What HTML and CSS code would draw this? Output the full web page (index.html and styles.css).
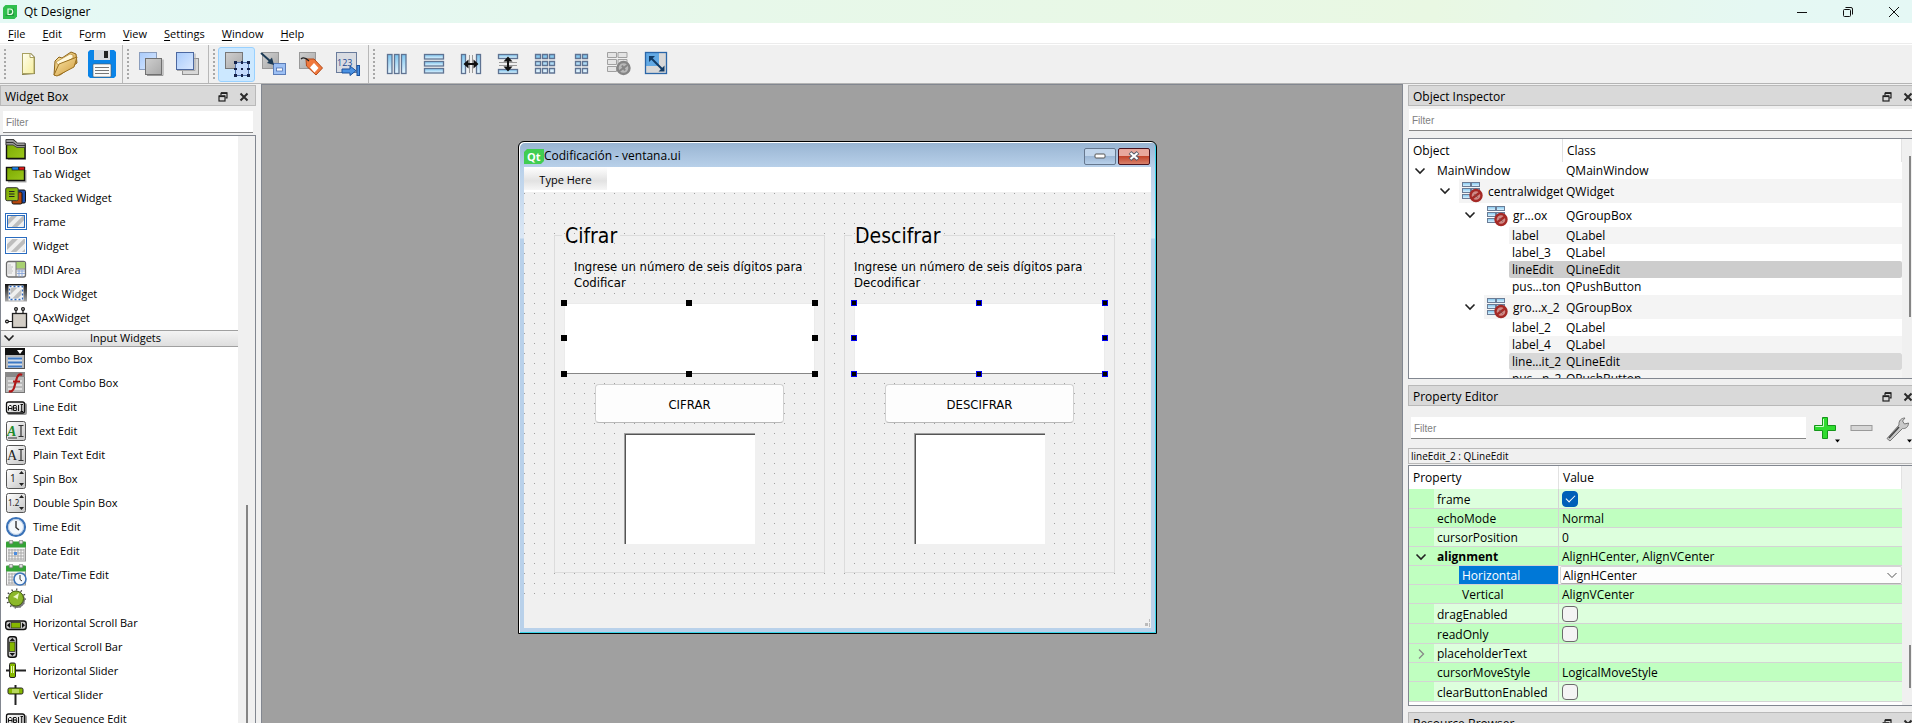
FILE: index.html
```html
<!DOCTYPE html>
<html lang="en">
<head>
<meta charset="utf-8">
<title>Qt Designer</title>
<link rel="stylesheet" href="styles.css">
</head>
<body>
<svg class="defs" aria-hidden="true">
  <defs>
    <linearGradient id="gCell" x1="0" y1="0" x2="0" y2="1"><stop offset="0" stop-color="#7cc4ee"/><stop offset="1" stop-color="#e6f6ff"/></linearGradient>
    <linearGradient id="gGray" x1="0" y1="0" x2="1" y2="1"><stop offset="0" stop-color="#cfcfcf"/><stop offset="1" stop-color="#a9a9a9"/></linearGradient>
    <linearGradient id="gBlue" x1="0" y1="0" x2="1" y2="1"><stop offset="0" stop-color="#a9cbfb"/><stop offset="1" stop-color="#dbe9ff"/></linearGradient>
    <linearGradient id="gGreen" x1="0" y1="0" x2="1" y2="1"><stop offset="0" stop-color="#7aa800"/><stop offset="1" stop-color="#9cc81c"/></linearGradient>
    <linearGradient id="gBtn" x1="0" y1="0" x2="1" y2="1"><stop offset="0" stop-color="#ffffff"/><stop offset="1" stop-color="#c4c4c4"/></linearGradient>
    <linearGradient id="gDark" x1="0" y1="0" x2="0" y2="1"><stop offset="0" stop-color="#111"/><stop offset="1" stop-color="#aaa"/></linearGradient>
    <linearGradient id="gPaper" x1="0" y1="0" x2="1" y2="1"><stop offset="0" stop-color="#fffef0"/><stop offset="1" stop-color="#f6ee9c"/></linearGradient>
    <linearGradient id="gFolder" x1="0" y1="0" x2="1" y2="1"><stop offset="0" stop-color="#fbe7a8"/><stop offset="1" stop-color="#cf9a3c"/></linearGradient>
    <pattern id="hatch" width="8" height="8" patternUnits="userSpaceOnUse" patternTransform="rotate(45)"><rect width="8" height="8" fill="#efefef"/><rect width="4" height="8" fill="#bdbdbd"/></pattern>
  </defs>
  <symbol id="float" viewBox="0 0 10 10"><path d="M3 .8h6v5H7.500M3 .8v2.500" fill="none" stroke="#222" stroke-width="1.200"/><path d="M3 1.200h6" stroke="#222" stroke-width="1.600"/><rect x="1" y="4" width="6" height="5" fill="none" stroke="#222" stroke-width="1.200"/><path d="M1 4.300h6" stroke="#222" stroke-width="1.600"/></symbol>
  <symbol id="close" viewBox="0 0 10 10"><path d="M1.500 1.500l7 7M8.500 1.500l-7 7" stroke="#2b2b2b" stroke-width="2"/></symbol>
  <symbol id="down" viewBox="0 0 12 12"><path d="M1.500 3.500L6 8l4.500-4.500" fill="none" stroke="#222" stroke-width="1.600"/></symbol>
  <symbol id="nolayout" viewBox="0 0 22 22">
    <g fill="url(#gCell)" stroke="#6a7c96"><rect x="1.500" y="1.500" width="8" height="4"/><rect x="10.500" y="1.500" width="8" height="4"/><rect x="1.500" y="7.500" width="8" height="4"/><rect x="10.500" y="7.500" width="8" height="4"/><rect x="1.500" y="13.500" width="8" height="4"/></g>
    <circle cx="15" cy="14.500" r="5.500" fill="#cf8a86" stroke="#a52a26" stroke-width="2.400"/><path d="M11 17.500l8-6" stroke="#a52a26" stroke-width="2.200"/><path d="M13.500 13l3 3.500" stroke="#7a4a48"/>
  </symbol>
  <symbol id="linee" viewBox="0 0 22 22"><rect x="2" y="7" width="20" height="12" rx="2" fill="#999"/><rect x="1.500" y="6" width="18" height="11" rx="2" fill="url(#gBtn)" stroke="#111" stroke-width="1.300"/><path d="M3.500 14.500v-4l1-1h1.500l1 1v4M3.500 12.500h3.500M8.500 9.500v5M8.500 9.500h2.500l.5 1-.5 1.500H8.500M11 12l.8 1-.5 1.500H8.500M13.500 9v6M15.500 8.500h2.500M15.500 15.500h2.500M16.700 8.500v7" fill="none" stroke="#111" stroke-width="1"/></symbol>
  <symbol id="cal" viewBox="0 0 22 22"><rect x="1.500" y="3" width="19" height="18" fill="#f4f4f4" stroke="#999"/><rect x="1" y="1.500" width="20" height="6" rx="1" fill="#35a336"/><rect x="4" y="0" width="4" height="4" rx="2" fill="#ddd" stroke="#777" stroke-width=".8"/><rect x="14" y="0" width="4" height="4" rx="2" fill="#ddd" stroke="#777" stroke-width=".8"/><path d="M3 10h16M3 13h16M3 16h16M3 19h16M4 9v11M7 9v11M10 9v11M13 9v11M16 9v11M19 9v11" stroke="#a9a9a9" stroke-width="1"/></symbol>
</svg>

<header class="titlebar">
  <svg class="app-icon" viewBox="0 0 14 14"><path d="M2.500 0H14v11.500L11.500 14H0V2.500z" fill="#2fbf4e"/><path d="M2 11l9-8v8z" fill="#1f9a3c"/><path d="M5 4h2a2.700 2.700 0 0 1 0 5.500H5z" fill="none" stroke="#e8ffe8" stroke-width="1.200"/></svg>
  <span class="app-name">Qt Designer</span>
  <div class="sysbtns">
    <button aria-label="Minimize"><svg width="12" height="12"><path d="M1 6.500h10" stroke="#111"/></svg></button>
    <button aria-label="Restore"><svg width="12" height="12" fill="none" stroke="#111"><rect x="1.500" y="3.500" width="7" height="7" rx="1"/><path d="M3.500 1.500h5.500a1.500 1.500 0 0 1 1.500 1.500v5.500"/></svg></button>
    <button aria-label="Close"><svg width="12" height="12"><path d="M1 1l10 10M11 1L1 11" stroke="#111"/></svg></button>
  </div>
</header>
<nav class="menubar">
  <button><u>F</u>ile</button><button><u>E</u>dit</button><button>F<u>o</u>rm</button><button><u>V</u>iew</button><button><u>S</u>ettings</button><button><u>W</u>indow</button><button><u>H</u>elp</button>
</nav>
<div class="toolbars">
  <div class="toolbar"><i class="grip"></i>
    <button aria-label="New"><svg viewBox="0 0 28 28"><path d="M8 3h9l4 4v17l-12 1H8z" fill="#8a8450"/><path d="M8.500 3.500H16l4 4v16H8.500z" fill="url(#gPaper)" stroke="#a8a060"/><path d="M16 3.500v4h4" fill="#fff" stroke="#a8a060"/></svg></button>
    <button aria-label="Open"><svg viewBox="0 0 28 28"><path d="M3 25L4 11l4-4 3 1 9-6 5 2 1 9-17 12z" fill="url(#gFolder)" stroke="#8c6318"/><path d="M5 12l14-8 3 1v3L8 16z" fill="#fff8dc" stroke="#b58a38" stroke-width=".7"/><path d="M3 25l5-11 18-7-3 10-17 9z" fill="url(#gFolder)" stroke="#9b7020"/></svg></button>
    <button aria-label="Save"><svg viewBox="0 0 28 28"><path d="M2 0h24l2 2v24l-2 2H2l-2-2V2z" fill="#0a84e8"/><rect x="6" y="0" width="16" height="10" fill="#d9dbe0"/><rect x="16" y="1" width="4" height="7" fill="#222"/><rect x="5" y="14" width="18" height="13" rx="1" fill="#fafafa" stroke="#555" stroke-width=".6"/><path d="M7 17.500h14M7 20.500h14M7 23.500h14" stroke="#777" stroke-width="1.200"/></svg></button>
  </div>
  <div class="toolbar"><i class="grip"></i>
    <button aria-label="Send to Back"><svg viewBox="0 0 28 28"><rect x="2.500" y="2.500" width="17" height="17" fill="url(#gBlue)" stroke="#8a9dbd"/><path d="M10 25.500h16v-16" fill="none" stroke="#999"/><rect x="8.500" y="8.500" width="16" height="16" fill="url(#gGray)" stroke="#707070"/></svg></button>
    <button aria-label="Bring to Front"><svg viewBox="0 0 28 28"><rect x="8.500" y="8.500" width="16" height="16" fill="#d8d8d8" stroke="#909090"/><path d="M3 20.500h18v-17" fill="none" stroke="#aaa"/><rect x="2.500" y="2.500" width="17" height="17" fill="url(#gBlue)" stroke="#4c68a0"/></svg></button>
  </div>
  <div class="toolbar"><i class="grip"></i>
    <button class="checked" aria-label="Edit Widgets" aria-pressed="true"><svg viewBox="0 0 28 28"><rect x="2.500" y="2.500" width="17" height="16" fill="url(#gGray)" stroke="#777"/><rect x="12.500" y="12.500" width="13" height="13" fill="#c3dafc" stroke="#5372ab"/><g fill="#16234a"><rect x="11" y="11" width="3" height="3"/><rect x="18" y="11" width="2" height="3"/><rect x="24" y="11" width="3" height="3"/><rect x="11" y="18" width="3" height="2"/><rect x="24" y="18" width="3" height="2"/><rect x="11" y="24" width="3" height="3"/><rect x="18" y="24" width="2" height="3"/><rect x="24" y="24" width="3" height="3"/><rect x="18" y="18" width="2" height="2"/></g></svg></button>
    <button aria-label="Edit Signals/Slots"><svg viewBox="0 0 28 28"><rect x="2.500" y="2.500" width="16" height="16" fill="url(#gGray)" stroke="#999"/><rect x="13.500" y="13.500" width="12" height="11" fill="#9dc0f4" stroke="#5b7db8"/><rect x="16.500" y="18" width="6" height="3" fill="#fff" stroke="#3f63a5" stroke-width=".7"/><path d="M1 3l9 8" stroke="#1c3a55" stroke-width="2"/><path d="M14 15l-7-2 5-5.500z" fill="#1c3a55"/></svg></button>
    <button aria-label="Edit Buddies"><svg viewBox="0 0 28 28"><rect x="2.500" y="2.500" width="16" height="16" fill="url(#gGray)" stroke="#999"/><path d="M9 9l8 0 8.500 9-6.500 7-9.500-9z" fill="#f0783c" stroke="#b34a1a"/><path d="M17 13l4.500 5-4 4.500-4.500-5z" fill="#fff"/><path d="M4 9c2-2 5-1 8 2" fill="none" stroke="#222" stroke-width="1.300"/></svg></button>
    <button aria-label="Edit Tab Order"><svg viewBox="0 0 28 28"><rect x="2.500" y="2.500" width="20" height="20" fill="#d9dce2" stroke="#6a7c9c"/><text x="3" y="16" class="t123">123</text><path d="M8 19h8v-3l6 4.700-6 4.800V23H8z" fill="#4b92e2" stroke="#1b519c"/><rect x="23" y="15.500" width="2.500" height="10" fill="#4b92e2" stroke="#1b519c"/></svg></button>
  </div>
  <div class="toolbar last"><i class="grip"></i>
    <button aria-label="Lay Out Horizontally"><svg viewBox="0 0 28 28"><g fill="url(#gCell)" stroke="#5f7392" stroke-width="1.300"><rect x="4.500" y="4.500" width="4.500" height="19"/><rect x="11.500" y="4.500" width="4.500" height="19"/><rect x="18.500" y="4.500" width="4.500" height="19"/></g></svg></button>
    <button aria-label="Lay Out Vertically"><svg viewBox="0 0 28 28"><g fill="url(#gCell)" stroke="#5f7392" stroke-width="1.300"><rect x="4.500" y="4.500" width="19" height="4.500"/><rect x="4.500" y="11.500" width="19" height="4.500"/><rect x="4.500" y="18.500" width="19" height="4.500"/></g></svg></button>
    <button aria-label="Horizontal Splitter"><svg viewBox="0 0 28 28"><g fill="url(#gCell)" stroke="#5f7392" stroke-width="1.300"><rect x="4.500" y="4.500" width="4" height="19"/><rect x="19.500" y="4.500" width="4" height="19"/></g><path d="M12.500 5v18M15.500 5v18" stroke="#999"/><path d="M6.500 14l5-4.500v3.500h5V9.500l5 4.500-5 4.500V15h-5v3.500z" fill="#111"/></svg></button>
    <button aria-label="Vertical Splitter"><svg viewBox="0 0 28 28"><g fill="url(#gCell)" stroke="#5f7392" stroke-width="1.300"><rect x="4.500" y="4.500" width="19" height="4"/><rect x="4.500" y="19.500" width="19" height="4"/></g><path d="M5 12.500h18M5 15.500h18" stroke="#999"/><path d="M14 6.500l4.500 5H15v5h3.500l-4.500 5-4.500-5H13v-5H9.500z" fill="#111"/></svg></button>
    <button aria-label="Grid Layout"><svg viewBox="0 0 28 28"><g fill="url(#gCell)" stroke="#5f7392" stroke-width="1.300"><path d="M4.500 4.500h5v4h-5zM11.500 4.500h5v4h-5zM18.500 4.500h5v4h-5zM4.500 11.500h5v4h-5zM11.500 11.500h5v4h-5zM18.500 11.500h5v4h-5zM4.500 18.500h5v4.500h-5zM11.500 18.500h5v4.500h-5zM18.500 18.500h5v4.500h-5z"/></g></svg></button>
    <button aria-label="Form Layout"><svg viewBox="0 0 28 28"><g fill="url(#gCell)" stroke="#5f7392" stroke-width="1.300"><path d="M7.500 4.500h5v4h-5zM14.500 4.500h5v4h-5zM7.500 11.500h5v4h-5zM14.500 11.500h5v4h-5zM7.500 18.500h5v4.500h-5zM14.500 18.500h5v4.500h-5z"/></g></svg></button>
    <button aria-label="Break Layout" disabled><svg viewBox="0 0 28 28"><g fill="#e4e4e4" stroke="#a0a0a0"><path d="M2.500 2.500h9v5h-9zM13 2.500h9v5h-9zM2.500 9.500h9v5h-9zM13 9.500h9v5h-9zM2.500 16.500h9v5h-9z"/></g><circle cx="18.500" cy="18" r="6" fill="#b8b8b8" stroke="#858585" stroke-width="2.400"/><path d="M14.500 21l8-6M17 15.500l3 5" stroke="#858585" stroke-width="2"/></svg></button>
    <button aria-label="Adjust Size"><svg viewBox="0 0 28 28"><rect x="4" y="3" width="21" height="21" fill="#d8d8d8"/><rect x="4" y="3" width="13" height="13" fill="#62a9e4"/><rect x="3.500" y="2.500" width="21" height="21" fill="none" stroke="#2a66a8" stroke-width="1.300"/><path d="M9 8l11 11" stroke="#123c66" stroke-width="2"/><path d="M7 6h6l-6 6zM22.500 21.500h-6l6-6z" fill="#123c66"/></svg></button>
  </div>
</div>

<main class="workspace">
  <section class="dock dock-left">
    <h2 class="dock-title"><span>Widget Box</span><button aria-label="Float"><svg><use href="#float"/></svg></button><button aria-label="Close"><svg><use href="#close"/></svg></button></h2>
    <input class="filter wb-filter" type="text" placeholder="Filter" aria-label="Filter widgets">
    <div class="wb-frame">
      <div class="wb-list">
        <ul>
          <li><svg viewBox="0 0 22 22"><path d="M2 6h19v15H3z" fill="#aaa"/><path d="M1.500 1h7l4 4h7.500v14.500h-18.500z" fill="url(#gGreen)" stroke="#111" stroke-width="1.400"/><path d="M1 .500h7l4.500 3.500H20v4.500h-8L8 6H1z" fill="#9a9a9a" stroke="#333" stroke-width=".8"/><path d="M1 3.500h7l4 3h8" fill="none" stroke="#333"/></svg>Tool Box</li>
          <li><svg viewBox="0 0 22 22"><path d="M2 7h19.500v12.500H3z" fill="#aaa"/><rect x="1.500" y="4.500" width="18" height="13" fill="url(#gGreen)" stroke="#111" stroke-width="1.400"/><rect x="7" y="4" width="6.500" height="3" fill="#1b7fe6" stroke="#111" stroke-width=".6"/><rect x="14" y="4" width="5.500" height="3" fill="#e01818" stroke="#111" stroke-width=".6"/></svg>Tab Widget</li>
          <li><svg viewBox="0 0 22 22"><rect x="11" y="3" width="9.500" height="13" rx="1.500" fill="#1e4fae" stroke="#111"/><rect x="7" y="5" width="10" height="12" rx="1.500" fill="#b8480e" stroke="#111"/><rect x=".7" y=".7" width="12.500" height="13" rx="1.500" fill="url(#gGreen)" stroke="#333"/><path d="M4 4.500h5.500M4 7h5.500M4 9.500h5.500" stroke="#222"/></svg>Stacked Widget</li>
          <li><svg viewBox="0 0 22 22"><rect x=".5" y="2.500" width="21" height="16" fill="#fff" stroke="#2a6cc0"/><rect x="2.500" y="4.500" width="17" height="12" fill="url(#hatch)" stroke="#2a6cc0"/></svg>Frame</li>
          <li><svg viewBox="0 0 22 22"><rect x=".5" y="2.500" width="21" height="16" fill="#fff" stroke="#2a6cc0"/><rect x="2" y="4" width="18" height="13" fill="url(#hatch)"/></svg>Widget</li>
          <li><svg viewBox="0 0 22 22"><rect x="1.500" y="2.500" width="19" height="15.500" rx="2" fill="#f1f1f1" stroke="#6b6b6b" stroke-width="1.300"/><path d="M11 3h9v6.500h-9z" fill="#a8d070"/><path d="M11 2.500v15.500M11 10h9.500" stroke="#777"/><path d="M3 6h3M3 8h5M3 10h4M3 12h5M3 14h4" stroke="#c2c2c2"/><path d="M12 12h8M12 14.500h8M14 11v7M17 11v7" stroke="#7fa0d8" stroke-width=".8"/></svg>MDI Area</li>
          <li><svg viewBox="0 0 22 22"><rect y="1" width="22" height="17.500" fill="url(#gDark)"/><rect x="4.500" y="3.500" width="13" height="13" fill="url(#hatch)" stroke="#fff" stroke-width="2"/><rect x="4.500" y="3.500" width="13" height="13" fill="none" stroke="#2b66bd" stroke-width="1.300" stroke-dasharray="2 2"/></svg>Dock Widget</li>
          <li><svg viewBox="0 0 22 22"><rect x="7.500" y="6.500" width="14" height="14" fill="#d3cec6" stroke="#222" stroke-width="1.300"/><g fill="none" stroke="#111" stroke-width="1.200"><circle cx="11" cy="2" r="1.400"/><circle cx="18" cy="2" r="1.400"/><circle cx="2" cy="14.500" r="1.400"/><path d="M11 3.500v3M18 3.500v3M3.500 14.500h4"/></g></svg>QAxWidget</li>
        </ul>
        <h3><svg><use href="#down"/></svg><span>Input Widgets</span></h3>
        <ul>
          <li><svg viewBox="0 0 22 22"><rect x=".5" y=".5" width="19" height="20" fill="#b9b9b9" stroke="#555"/><rect width="20" height="7" fill="#111"/><path d="M12 2h6l-3 4z" fill="#fff"/><rect x="3" y="9" width="14" height="11" fill="#d7dfe9"/><path d="M3 10.500h14M3 14.500h14M3 18.500h14" stroke="#3c78c4" stroke-width="2"/></svg>Combo Box</li>
          <li><svg viewBox="0 0 22 22"><rect x=".5" y=".5" width="19" height="20" fill="#b9b9b9" stroke="#777"/><rect width="20" height="5" fill="#888"/><path d="M3 9h14M3 13h14M3 17h14" stroke="#ddd" stroke-width="2"/><path d="M17 3c-3-2-5 1-6 6l-2 7c-1 3-3 4-5 3M8 9.500h7" fill="none" stroke="#b01616" stroke-width="2.200"/></svg>Font Combo Box</li>
          <li><svg><use href="#linee"/></svg>Line Edit</li>
          <li><svg viewBox="0 0 22 22"><rect x="1.500" y="1.500" width="19" height="19" rx="2" fill="url(#gBtn)" stroke="#555"/><text x="2" y="16" class="ai green">A</text><path d="M13.500 5.500h5M13.500 16.500h5M16 5v11.500M3 18h9" stroke="#333" stroke-width="1.200"/></svg>Text Edit</li>
          <li><svg viewBox="0 0 22 22"><rect x="1.500" y="1.500" width="19" height="19" rx="2" fill="url(#gBtn)" stroke="#555"/><text x="2" y="16" class="ai">A</text><path d="M13.500 5.500h5M13.500 16.500h5M16 5v11.500" stroke="#333" stroke-width="1.200"/></svg>Plain Text Edit</li>
          <li><svg viewBox="0 0 22 22"><rect x="1.500" y="1.500" width="19" height="19" rx="2" fill="url(#gBtn)" stroke="#555"/><text x="5" y="14" class="num">1</text><path d="M14 6l2.500-3L19 6zM14 15l2.500 3 2.500-3z" fill="#222"/></svg>Spin Box</li>
          <li><svg viewBox="0 0 22 22"><rect x="1.500" y="1.500" width="19" height="19" rx="2" fill="url(#gBtn)" stroke="#555"/><text x="3" y="14" class="num sm">1.2</text><path d="M14 6l2.500-3L19 6zM14 15l2.500 3 2.500-3z" fill="#222"/></svg>Double Spin Box</li>
          <li><svg viewBox="0 0 22 22"><circle cx="11" cy="11" r="9" fill="#f3f8fd" stroke="#3a72b8" stroke-width="2.200"/><circle cx="11" cy="11" r="7.500" fill="none" stroke="#b8cce4"/><path d="M11 5v6.500l3 2.500" fill="none" stroke="#333" stroke-width="1.400"/></svg>Time Edit</li>
          <li><svg viewBox="0 0 22 22"><use href="#cal"/><rect x="9" y="12" width="3" height="3" fill="#4b8ce0"/></svg>Date Edit</li>
          <li><svg viewBox="0 0 22 22"><use href="#cal"/><circle cx="15" cy="15" r="6" fill="#f3f8fd" stroke="#3a72b8" stroke-width="1.600"/><path d="M15 11v4.500l2 1.500" fill="none" stroke="#333"/></svg>Date/Time Edit</li>
          <li><svg viewBox="0 0 22 22"><circle cx="11" cy="10.500" r="9" fill="none" stroke="#444" stroke-width="2" stroke-dasharray="1.200 3.500"/><circle cx="12" cy="12" r="8" fill="#777"/><circle cx="11" cy="10.500" r="7.500" fill="#8cb82a" stroke="#44600c"/><path d="M8 9l6-4-1.500 6.500-1.500-1.500z" fill="#eef8c8"/></svg>Dial</li>
          <li><svg viewBox="0 0 22 22"><rect x=".700" y="9" width="20.500" height="8.500" rx="2.500" fill="#ccc" stroke="#111" stroke-width="1.400"/><rect x="6" y="10.500" width="9.500" height="5.500" fill="#86b800" stroke="#222" stroke-width=".7"/><path d="M5 10.500v5.500l-3-2.700zM17 10.500v5.500l3-2.700z" fill="#111"/></svg>Horizontal Scroll Bar</li>
          <li><svg viewBox="0 0 22 22"><rect x="3" y=".7" width="8.500" height="20.500" rx="2.500" fill="#ccc" stroke="#111" stroke-width="1.400"/><rect x="4.500" y="6" width="5.500" height="9.500" fill="#86b800" stroke="#222" stroke-width=".7"/><path d="M4.500 5H10L7.300 2zM4.500 17H10l-2.700 3z" fill="#111"/></svg>Vertical Scroll Bar</li>
          <li><svg viewBox="0 0 22 22"><path d="M1 10.500h20" stroke="#222" stroke-width="2"/><rect x="4.500" y="3" width="6" height="14.500" rx="1.500" fill="#86b800" stroke="#222"/><path d="M6.500 6v7M8.500 6v7" stroke="#e9f8b8"/></svg>Horizontal Slider</li>
          <li><svg viewBox="0 0 22 22"><path d="M10.500 1v20" stroke="#222" stroke-width="2"/><rect x="3" y="4" width="15" height="6" rx="1.500" fill="#86b800" stroke="#222"/><path d="M7 6h7M7 8h7" stroke="#e9f8b8"/></svg>Vertical Slider</li>
          <li><svg><use href="#linee"/></svg>Key Sequence Edit</li>
        </ul>
      </div>
      <div class="wb-scroll"><i></i></div>
    </div>
  </section>

  <section class="mdi">
    <article class="form-window">
      <header class="fw-title">
        <svg class="qt" viewBox="0 0 20 15"><path d="M3 0h17v12l-3 3H0V3z" fill="#41cd52"/><text x="3" y="12">Qt</text></svg>
        <span>Codificación - ventana.ui</span>
        <button class="fw-min" aria-label="Minimize"><svg width="12" height="6"><rect x="1" y="1" width="10" height="4" rx="1" fill="#fff" stroke="#555"/></svg></button>
        <button class="fw-close" aria-label="Close"><svg width="12" height="10"><path d="M2 1.500l8 7M10 1.500l-8 7" stroke="#555c6a" stroke-width="4"/><path d="M2.500 2l7 6M9.500 2l-7 6" stroke="#fff" stroke-width="2.200"/></svg></button>
      </header>
      <nav class="fw-menu"><button>Type Here</button></nav>
      <div class="fw-central">
        <fieldset>
          <legend>Cifrar</legend>
          <label class="indent" for="le1">Ingrese un número de seis dígitos para Codificar</label>
          <div class="edit black">
            <input id="le1" type="text">
            <i></i><i></i><i></i><i></i><i></i><i></i><i></i><i></i>
          </div>
          <button class="push">CIFRAR</button>
          <textarea class="view" aria-label="Cifrar result" readonly></textarea>
        </fieldset>
        <fieldset>
          <legend>Descifrar</legend>
          <label for="le2">Ingrese un número de seis dígitos para Decodificar</label>
          <div class="edit blue">
            <input id="le2" type="text">
            <i></i><i></i><i></i><i></i><i></i><i></i><i></i><i></i>
          </div>
          <button class="push">DESCIFRAR</button>
          <textarea class="view" aria-label="Descifrar result" readonly></textarea>
        </fieldset>
      </div>
      <footer class="fw-status"><svg width="6" height="8"><path d="M4.500 0v3M4.500 4v4" stroke="#bbb"/><rect y="4" width="3" height="3" fill="#bbb"/></svg></footer>
    </article>
  </section>

  <aside class="dock-right">
    <section class="dock">
      <h2 class="dock-title"><span>Object Inspector</span><button aria-label="Float"><svg><use href="#float"/></svg></button><button aria-label="Close"><svg><use href="#close"/></svg></button></h2>
      <input class="filter oi-filter" type="text" placeholder="Filter" aria-label="Filter objects">
      <div class="frame oi-frame">
        <table class="tree">
          <thead><tr><th class="c1">Object</th><th>Class</th></tr></thead>
          <tbody>
            <tr class="l0"><td><div><button aria-label="Collapse"><svg><use href="#down"/></svg></button><span>MainWindow</span></div></td><td>QMainWindow</td></tr>
            <tr class="l1 tall alt"><td><div><button aria-label="Collapse"><svg><use href="#down"/></svg></button><span><svg><use href="#nolayout"/></svg>centralwidget</span></div></td><td>QWidget</td></tr>
            <tr class="l2 tall"><td><div><button aria-label="Collapse"><svg><use href="#down"/></svg></button><span><svg><use href="#nolayout"/></svg>gr...ox</span></div></td><td>QGroupBox</td></tr>
            <tr class="l4 alt"><td><div><span>label</span></div></td><td>QLabel</td></tr>
            <tr class="l4"><td><div><span>label_3</span></div></td><td>QLabel</td></tr>
            <tr class="l4 sel"><td><div><span>lineEdit</span></div></td><td>QLineEdit</td></tr>
            <tr class="l4"><td><div><span>pus...ton</span></div></td><td>QPushButton</td></tr>
            <tr class="l2 tall alt"><td><div><button aria-label="Collapse"><svg><use href="#down"/></svg></button><span><svg><use href="#nolayout"/></svg>gro...x_2</span></div></td><td>QGroupBox</td></tr>
            <tr class="l4"><td><div><span>label_2</span></div></td><td>QLabel</td></tr>
            <tr class="l4 alt"><td><div><span>label_4</span></div></td><td>QLabel</td></tr>
            <tr class="l4 sel sel2"><td><div><span>line...it_2</span></div></td><td>QLineEdit</td></tr>
            <tr class="l4 alt"><td><div><span>pus...n_2</span></div></td><td>QPushButton</td></tr>
          </tbody>
        </table>
        <div class="sb sb-oi"><i></i></div>
      </div>
    </section>

    <section class="dock">
      <h2 class="dock-title"><span>Property Editor</span><button aria-label="Float"><svg><use href="#float"/></svg></button><button aria-label="Close"><svg><use href="#close"/></svg></button></h2>
      <div class="pe-bar">
        <input class="filter" type="text" placeholder="Filter" aria-label="Filter properties">
        <button aria-label="Add"><svg viewBox="0 0 28 28"><path d="M10.500 3.500h5v8h8v5h-8v8h-5v-8h-8v-5h8z" fill="#2fdc2f" stroke="#15961a"/><path d="M11.500 5v7.500h-8" fill="none" stroke="#c8ffc8"/><path d="M23 25.500h5l-2.500 3z" fill="#000"/></svg></button>
        <button aria-label="Remove" disabled><svg viewBox="0 0 28 28"><rect x="3" y="11.500" width="21" height="5" fill="#d6d6d6" stroke="#9a9a9a"/></svg></button>
        <button aria-label="Configure"><svg viewBox="0 0 28 28"><path d="M3 24.500L15 11c-.5-4 2-7 6-7l-2.500 3 2 3 4-1c0 4-3 6-6 5.500L6 27z" fill="#c9c9c9" stroke="#777"/><path d="M5 24L15 13" stroke="#444" stroke-width="1.500"/><path d="M23 25.500h5l-2.500 3z" fill="#000"/></svg></button>
      </div>
      <div class="pe-object">lineEdit_2 : QLineEdit</div>
      <div class="frame pe-frame">
        <table class="props">
          <thead><tr><th class="c1">Property</th><th>Value</th></tr></thead>
          <tbody>
            <tr class="chk"><td><span>frame</span></td><td><input type="checkbox" checked aria-label="frame"></td></tr>
            <tr class="dk"><td><span>echoMode</span></td><td>Normal</td></tr>
            <tr><td><span>cursorPosition</span></td><td>0</td></tr>
            <tr class="dk"><td><button aria-label="Collapse"><svg><use href="#down"/></svg></button><b>alignment</b></td><td>AlignHCenter, AlignVCenter</td></tr>
            <tr class="current"><td><span>Horizontal</span></td><td><select aria-label="Horizontal"><option>AlignHCenter</option></select><svg class="chev" viewBox="0 0 12 12"><path d="M1.500 4L6 8.500 10.500 4" fill="none" stroke="#555"/></svg></td></tr>
            <tr class="dk sub"><td><span>Vertical</span></td><td>AlignVCenter</td></tr>
            <tr class="chk"><td><span>dragEnabled</span></td><td><input type="checkbox" aria-label="dragEnabled"></td></tr>
            <tr class="dk chk"><td><span>readOnly</span></td><td><input type="checkbox" aria-label="readOnly"></td></tr>
            <tr><td><button aria-label="Expand"><svg viewBox="0 0 12 12"><path d="M4 1.500L8.500 6 4 10.500" fill="none" stroke="#888" stroke-width="1.300"/></svg></button><span>placeholderText</span></td><td></td></tr>
            <tr class="dk"><td><span>cursorMoveStyle</span></td><td>LogicalMoveStyle</td></tr>
            <tr class="chk"><td><span>clearButtonEnabled</span></td><td><input type="checkbox" aria-label="clearButtonEnabled"></td></tr>
          </tbody>
        </table>
        <div class="sb sb-pe"><i></i></div>
      </div>
    </section>

    <section class="dock">
      <h2 class="dock-title"><span>Resource Browser</span><button aria-label="Float"><svg><use href="#float"/></svg></button><button aria-label="Close"><svg><use href="#close"/></svg></button></h2>
    </section>
  </aside>
</main>
</body>
</html>
```
FILE: styles.css
```css
* { box-sizing: border-box; }
body {
  margin: 0;
  height: 100vh;
  display: flex;
  flex-direction: column;
  overflow: hidden;
  background: #f0f0f0;
  color: #000;
  font: 11px/16px "Open Sans", "Noto Sans", sans-serif;
}
button, input, select, textarea { font: inherit; color: inherit; margin: 0; }
button { background: none; border: 0; padding: 0; }
svg { display: block; flex: none; overflow: visible; }
ul { list-style: none; margin: 0; padding: 0; }
h2, h3 { margin: 0; font: inherit; }
.defs { position: absolute; width: 0; height: 0; }

.titlebar {
  height: 23px;
  flex: none;
  display: flex;
  align-items: center;
  padding-left: 3px;
  background: linear-gradient(90deg, #e5f9f5 0%, #e5f8f2 18%, #e7f8ea 38%, #e9f8e3 75%, #e5f8f3 92%, #e5f8f5 100%);
}
.app-icon { width: 14px; height: 14px; }
.app-name { flex: 1; padding: 1px 0 0 7px; font-size: 12px; }
.sysbtns { display: flex; height: 20px; margin-right: -5px; }
.sysbtns button { width: 46px; display: grid; place-items: center; }

.menubar { flex: none; height: 21px; display: flex; gap: 1px; background: #fff; border-bottom: 1px solid #ececec; }
.menubar button { padding: 1px 8px 0; font-size: 11px; }
.menubar u { text-underline-offset: 2px; }

.toolbars { flex: none; height: 40px; display: flex; border-top: 1px solid #fff; border-bottom: 1px solid #b4b4b4; }
.toolbar { display: flex; align-items: center; padding-right: 2px; border-right: 1px solid #b8b8b8; }
.toolbar.last { border: 0; }
.grip {
  width: 9px;
  height: 32px;
  background: linear-gradient(180deg, #a8a8a8 2px, transparent 2px) 4px 1px / 2px 4px repeat-y;
}
.toolbar button { width: 37px; height: 35px; display: grid; place-items: center; border: 1px solid transparent; border-radius: 3px; }
.toolbar svg { width: 28px; height: 28px; }
.toolbar .checked { background: #cce8ff; border-color: #99d1ff; }
.t123 { font-size: 9px; fill: #1b4a90; }

.workspace { flex: 1; min-height: 0; display: flex; gap: 5px; }
.dock-left { width: 256px; flex: none; display: flex; flex-direction: column; padding-top: 1px; }
.dock-title {
  height: 21px;
  flex: none;
  display: flex;
  align-items: center;
  gap: 9px;
  padding: 2px 5px 0 4px;
  background: #d9d9d9;
  border: 1px solid #b9b9b9;
}
.dock-title span { flex: 1; font-size: 12px; }
.dock-title svg { width: 10px; height: 10px; }
.dock-title button { width: 12px; height: 12px; display: grid; place-items: center; }
.filter {
  height: 22px;
  background: #fff;
  border: 0;
  border-bottom: 1px solid #868686;
  padding: 2px 3px 0;
  font: 10px "Liberation Sans", sans-serif;
}
.filter::placeholder { color: #808080; opacity: 1; }
.wb-filter { margin: 5px 3px 2px; flex: none; }
.wb-frame { flex: 1; min-height: 0; display: flex; border: 1px solid #828790; border-bottom: 0; background: #fff; }
.wb-list { flex: 1; overflow: hidden; padding-top: 2px; }
.wb-list li { height: 24px; display: flex; align-items: center; gap: 6px; padding-left: 4px; }
.wb-list li svg { width: 22px; height: 22px; }
.wb-list h3 {
  height: 17px;
  display: flex;
  align-items: center;
  background: linear-gradient(#f4f4f4, #dedede);
  border-top: 1px solid #a0a0a0;
  border-bottom: 1px solid #a0a0a0;
  padding: 0 2px 2px;
}
.wb-list h3 svg { width: 12px; height: 12px; }
.wb-list h3 span { flex: 1; text-align: center; }
.wb-scroll { width: 17px; background: #f0f0f0; padding: 369px 0 0 8px; }
.wb-scroll i { display: block; width: 2px; height: 100%; background: #858585; }
.ai { font: 14px "Liberation Serif", serif; fill: #222; }
.ai.green { fill: #1f8a2c; font-style: italic; font-weight: bold; }
.num { font: 10px "Noto Sans", sans-serif; fill: #222; }
.num.sm { font-size: 8px; }

.mdi { flex: 1; position: relative; background: #a0a0a0; border: 1px solid #828790; border-bottom: 0; overflow: hidden; }
.form-window {
  position: absolute;
  left: 256px;
  top: 56px;
  padding: 0 5px 5px;
  border: 1px solid #000;
  border-radius: 6px 6px 0 0;
  background: linear-gradient(#98b4d2 0, #b9d1ea 26px, #dce8f5 96px, #b9d1ea 97px);
  box-shadow: inset 1px 1px #fff, inset -1px -1px #38d5ea;
}
.fw-title { height: 25px; display: flex; align-items: center; padding: 3px 1px 0 0; }
.fw-title span { flex: 1; font-size: 12px; }
.qt { width: 20px; height: 15px; }
.qt text { font: bold 11px "Open Sans", sans-serif; fill: #fff; }
.fw-title button { height: 17px; width: 32px; display: grid; place-items: center; border-radius: 2px; }
.fw-min { background: linear-gradient(#c2d6ec 50%, #9db8d6 50%, #b8d0ea); border: 1px solid #66788f; margin-right: 2px; }
.fw-close { background: linear-gradient(#e8a79c 50%, #c2452c 50%, #d8806a); border: 1px solid #4a1420; }
.fw-menu { height: 25px; background: #fff; }
.fw-menu button { width: 83px; height: 23px; padding-top: 2px; background: linear-gradient(#fff, #e2e2e2 60%, #f6f6f6); }
.fw-central {
  display: grid;
  grid-template-columns: 271px 271px;
  gap: 19px;
  padding: 30px 36px 23px 30px;
  font: 13px/16px "DejaVu Sans Condensed", "DejaVu Sans", sans-serif;
  background:
    linear-gradient(180deg, transparent 1px, #f0f0f0 1px) 0 1px / 10px 10px,
    linear-gradient(90deg, #a0a0a0 1px, #f0f0f0 1px) 0 0 / 10px 10px;
}
fieldset { margin: 0; min-width: 0; padding: 0 9px 28px; border: 1px solid #dcdcdc; display: block; }
legend { height: 26px; line-height: 29px; font-size: 21px; padding: 0 3px; margin-left: -2px; }
fieldset label { display: block; height: 32px; margin: 11px 0 12px; }
fieldset label.indent { padding-left: 10px; }
.edit { position: relative; height: 71px; }
.edit input { display: block; width: 100%; height: 100%; border: 1px solid #ebebeb; border-bottom-color: #868686; background: #fff; text-align: center; }
.edit i { position: absolute; width: 6px; height: 6px; background: #000; top: -3px; left: -3px; }
.edit.blue i { border: 1px solid #0000f0; }
.edit i:nth-of-type(3n + 2) { left: calc(50% - 4px); }
.edit i:nth-of-type(3) { left: auto; right: -3px; }
.edit i:nth-of-type(4), .edit i:nth-of-type(5) { top: calc(50% - 4px); }
.edit i:nth-of-type(5) { left: auto; right: -3px; }
.edit i:nth-of-type(n + 6) { top: auto; bottom: -3px; }
.edit i:nth-of-type(7) { left: calc(50% - 4px); }
.edit i:nth-of-type(8) { left: auto; right: -3px; }
.push { display: block; width: 189px; height: 39px; margin: 10px auto; padding-top: 2px; background: #fdfdfd; border: 1px solid #d0d0d0; border-bottom-color: #b8b8b8; border-radius: 4px; }
.view { display: block; width: 131px; height: 111px; margin: 0 auto; resize: none; background: #fff; border: 0; border-top: 1px solid #a0a0a0; border-left: 1px solid #a0a0a0; box-shadow: inset 1px 1px #555; }
.fw-status { height: 32px; background: #f0f0f0; display: flex; align-items: flex-end; justify-content: flex-end; padding: 1px 0; }

.dock-right { flex: none; width: 512px; margin-right: -8px; padding-top: 1px; display: flex; flex-direction: column; gap: 6px; }
.oi-filter { display: block; margin: 3px 0 7px 1px; width: 511px; }
.frame { display: flex; border: 1px solid #828790; background: #fff; overflow: hidden; }
.oi-frame { height: 241px; }
table { flex: 1; align-self: flex-start; border-collapse: separate; border-spacing: 0; table-layout: fixed; width: 493px; }
th { font-weight: normal; text-align: left; height: 23px; padding: 0 4px; border-right: 1px solid #e2e2e2; font-size: 12px; }
td { padding: 0; white-space: nowrap; overflow: hidden; }
td svg { width: 12px; height: 12px; }
.tree th.c1 { width: 154px; }
.tree td { height: 17px; font-size: 12px; line-height: 16px; padding-left: 3px; }
.tree td:first-child { padding-left: 0; }
.tree td div { display: flex; height: 17px; }
.tree td button { width: 25px; padding-right: 3px; display: grid; place-items: center; }
.tree td span { flex: 1; display: flex; align-items: center; padding-left: 3px; overflow: hidden; }
.tree td span svg { width: 22px; height: 22px; margin: 0 5px 0 -1px; }
.tree .tall td, .tree .tall td div { height: 24px; }
.tree .tall td:last-child { padding-top: 2px; }
.tree .tall td span { padding-top: 1px; }
.l1 td div { padding-left: 25px; }
.l2 td div { padding-left: 50px; }
.l4 td div { padding-left: 100px; }
.alt td:last-child, .alt td span { background: #f4f4f4; }
.sel td:last-child, .sel td span { background: #cdcdcd; }
.sel2 td:last-child, .sel2 td span { background: #d8d8d8; }
.sel td:last-child { border-radius: 0 2px 2px 0; }
.sel td span { border-radius: 2px 0 0 2px; }
.sb { flex: none; width: 17px; background: #f0f0f0; }
.sb i { display: block; width: 2px; margin-left: 7px; background: #858585; }
.sb-oi { padding-top: 17px; }
.sb-oi i { height: 161px; }
.sb-pe { padding-top: 179px; }
.sb-pe i { height: 43px; }

.pe-bar { height: 42px; display: flex; align-items: center; padding: 1px 0 0 3px; }
.pe-bar .filter { width: 395px; margin-right: 6px; flex: none; }
.pe-bar button { width: 37px; height: 28px; }
.pe-bar svg { width: 28px; height: 28px; }
.pe-object { height: 16px; border: 1px solid #b9b9b9; font-size: 10px; line-height: 15px; padding-left: 2px; margin-bottom: 1px; }
.pe-frame { height: 241px; }
.props th.c1 { width: 150px; }
.props td { height: 19px; border-bottom: 1px solid #d4d4d4; background: #ddffdd; font-size: 12px; line-height: 16px; padding: 2px 0 0 3px; position: relative; }
.props .chk td { height: 20px; }
.props .chk td:last-child { padding-top: 1px; }
.props td:first-child { border-right: 1px solid #d4d4d4; background: linear-gradient(90deg, #c0ffc0 25px, #ddffdd 25px); padding-left: 28px; }
.props .dk td, .props .dk td:first-child { background: #c0ffc0; }
.props .sub td:first-child { padding-left: 53px; }
.props .current td:first-child { background: linear-gradient(90deg, #c0ffc0 50px, #0078d7 50px); color: #fff; padding: 2px 0 0 53px; }
.props .current td { padding: 0 0 0 1px; background: #fff; }
.props td button { float: left; width: 12px; height: 16px; margin-left: -22px; display: grid; place-items: center; }
.props input { appearance: none; display: block; width: 16px; height: 16px; border: 1px solid #6b6b6b; border-radius: 4px; background: #f4f4f4; }
.props input:checked {
  border-color: #005fb8;
  background: #005fb8;
}
.props input:checked::after { content: ""; display: block; width: 8px; height: 4px; margin: 3px; border: solid #fff; border-width: 0 0 1px 1px; transform: rotate(-45deg); }
.props select { appearance: none; display: block; width: 100%; height: 18px; border: 1px solid #d4d4d4; border-bottom-color: #b0b0b0; border-radius: 2px; padding: 1px 2px 0; background: #fdfdfd; line-height: 16px; }
.chev { position: absolute; right: 4px; top: 3px; pointer-events: none; }
```
